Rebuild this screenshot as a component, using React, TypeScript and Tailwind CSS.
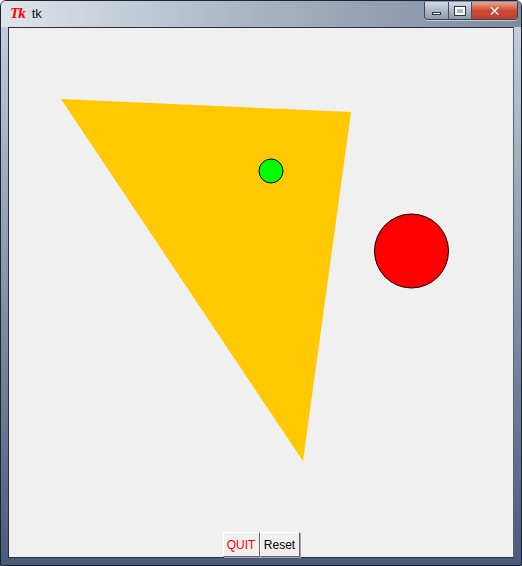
import React from 'react';

function TkLogo() {
  return (
    <span className="font-['Liberation_Serif',serif] italic font-bold text-[15px] leading-none text-[#ff0000] tracking-[-1px]">
      Tk
    </span>
  );
}

function CaptionButtons() {
  return (
    <div className="flex h-[18px] self-start mt-[1px] mr-[3px] rounded-b-[4px] border border-t-0 border-[#3b4250] overflow-hidden shadow-[0_1px_0_rgba(255,255,255,0.5)]">
      <div className="w-[24px] flex items-center justify-center bg-gradient-to-b from-[#d4dae3] via-[#b0b9c6] to-[#8e9aab] border-r border-[#4a5160]">
        <div className="w-[9px] h-[3px] mt-[6px] bg-white border border-[#30343c]" />
      </div>
      <div className="w-[23px] flex items-center justify-center bg-gradient-to-b from-[#d4dae3] via-[#b0b9c6] to-[#8e9aab] border-r border-[#4a5160]">
        <div className="w-[10px] h-[8px] border-2 border-white outline outline-1 outline-[#30343c]" />
      </div>
      <div className="w-[45px] flex items-center justify-center bg-gradient-to-b from-[#e8a390] via-[#cf4a32] to-[#c0402c]">
        <span className="font-['DejaVu_Sans',sans-serif] font-bold text-[14px] leading-none text-white [text-shadow:0_0_1px_#333]">
          ✕
        </span>
      </div>
    </div>
  );
}

export default function App() {
  return (
    <div className="w-[522px] h-[566px] flex flex-col rounded-t-[6px] border border-[#1e2430] bg-gradient-to-b from-[#c9d1dc] via-[#8794aa] to-[#4a5a7a] overflow-hidden">
      {/* title bar */}
      <div className="h-[26px] flex items-start justify-between bg-gradient-to-r from-[#dfe4ea] via-[#a8b3c2] to-[#7d8aa0]">
        <div className="flex items-center gap-[7px] pl-[9px] pt-[5px]">
          <TkLogo />
          <span className="font-['Liberation_Sans',sans-serif] text-[13px] leading-none text-[#111]">tk</span>
        </div>
        <CaptionButtons />
      </div>

      {/* client area */}
      <div className="mx-[7px] flex-1 flex flex-col bg-[#f0f0f0] border border-[#2a2f3a] border-r-[#5b6270]">
        <svg width="504" height="504" viewBox="9 28 504 504" className="block">
          <polygon points="61,99 351,112 303,461" fill="#ffc800" />
          <circle cx="271" cy="171" r="12" fill="#00ff00" stroke="#000" strokeWidth="1" />
          <circle cx="411.5" cy="251" r="37" fill="#ff0000" stroke="#000" strokeWidth="1" />
        </svg>
        <div className="flex justify-center">
          <button className="h-[25px] w-[37px] bg-[#f0f0f0] border border-t-white border-l-white border-r-[#696969] border-b-[#696969] shadow-[1px_1px_0_#a0a0a0] font-['Liberation_Sans',sans-serif] text-[12px] text-[#ff0000]">
            QUIT
          </button>
          <button className="h-[25px] w-[40px] bg-[#f0f0f0] border border-t-white border-l-white border-r-[#696969] border-b-[#696969] shadow-[1px_1px_0_#a0a0a0] font-['Liberation_Sans',sans-serif] text-[12px] text-black">
            Reset
          </button>
        </div>
      </div>
      <div className="h-[7px]" />
    </div>
  );
}
